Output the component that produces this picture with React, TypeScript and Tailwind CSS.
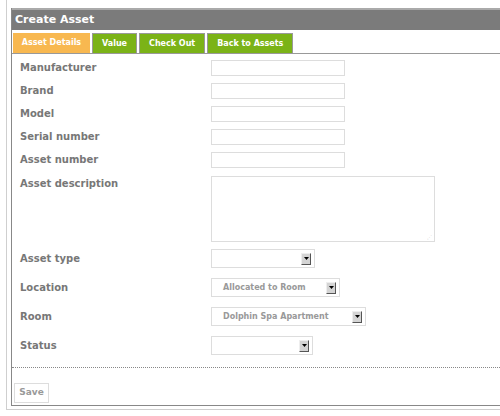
import React from 'react'

const font = { fontFamily: '"DejaVu Sans", Verdana, sans-serif' }

function TextRow({ label }: { label: string }) {
  return (
    <div className="flex h-[23px] items-center">
      <div className="w-[199px] pl-[8px] text-[10px] font-bold text-[#777]">{label}</div>
      <div className="h-[16px] w-[134px] border border-[#ddd] bg-white" />
    </div>
  )
}

function SelectBox({ width, value }: { width: string; value?: string }) {
  return (
    <div className={`flex h-[19px] items-center justify-between border border-[#ddd] bg-white pl-[11px] pr-[3px] ${width}`}>
      <span className="text-[8px] font-bold text-[#999]">{value ?? ''}</span>
      <span className="flex h-[12px] w-[10px] items-center justify-center border border-t-[#eee] border-l-[#eee] border-r-[#555] border-b-[#555] bg-[#d4d4d4]">
        <svg width="5" height="3" viewBox="0 0 5 3">
          <path d="M0 0h5L2.5 3z" fill="#000" />
        </svg>
      </span>
    </div>
  )
}

function SelectRow({ label, width, value }: { label: string; width: string; value?: string }) {
  return (
    <div className="flex h-[29px] items-center">
      <div className="w-[199px] pl-[8px] text-[10px] font-bold text-[#777]">{label}</div>
      <SelectBox width={width} value={value} />
    </div>
  )
}

export default function App() {
  const tabs = ['Value', 'Check Out', 'Back to Assets']

  return (
    <div className="h-[416px] w-[500px] overflow-hidden bg-white" style={font}>
      <div className="ml-[6px] h-[410px] border-b border-l border-[#cfcfcf] pb-[3px] pl-[4px] pt-[8px]">
        <div className="flex h-full flex-col border-b border-l border-[#888]">
          <div className="flex h-[22px] items-center border-t-2 border-[#aaa] bg-[#7b7b7b] pl-[3px] text-[11px] font-bold text-white">
            Create Asset
          </div>
          <div className="flex h-[24px] items-end gap-[2px] border-b border-[#999] bg-white pl-[1px]">
            <div className="flex h-[20px] w-[77px] items-center justify-center bg-[#f8b850] text-[8px] font-bold text-white">
              Asset Details
            </div>
            {tabs.map((t) => (
              <div
                key={t}
                className="flex h-[20px] items-center border-t border-x border-[#999] bg-[#7bb317] px-[9px] text-[8px] font-bold text-white"
              >
                {t}
              </div>
            ))}
          </div>
          <div className="border-b border-dotted border-[#888] pb-[7px] pt-[2px]">
            <TextRow label="Manufacturer" />
            <TextRow label="Brand" />
            <TextRow label="Model" />
            <TextRow label="Serial number" />
            <TextRow label="Asset number" />
            <div className="flex h-[73px] items-start pt-[5px]">
              <div className="w-[199px] pl-[8px] text-[10px] font-bold text-[#777]">Asset description</div>
              <div className="relative h-[66px] w-[224px] border border-[#ddd] bg-white">
                <span className="absolute bottom-[1px] right-[2px] text-[5px] leading-none text-[#bbb]">⋰</span>
              </div>
            </div>
            <SelectRow label="Asset type" width="w-[104px]" />
            <SelectRow label="Location" width="w-[129px]" value="Allocated to Room" />
            <SelectRow label="Room" width="w-[155px]" value="Dolphin Spa Apartment" />
            <SelectRow label="Status" width="w-[102px]" />
          </div>
          <div className="flex flex-1 items-start pl-[2px] pt-[15px]">
            <button className="h-[20px] w-[35px] border border-[#ddd] bg-white text-[9px] font-bold text-[#999]">
              Save
            </button>
          </div>
        </div>
      </div>
    </div>
  )
}
